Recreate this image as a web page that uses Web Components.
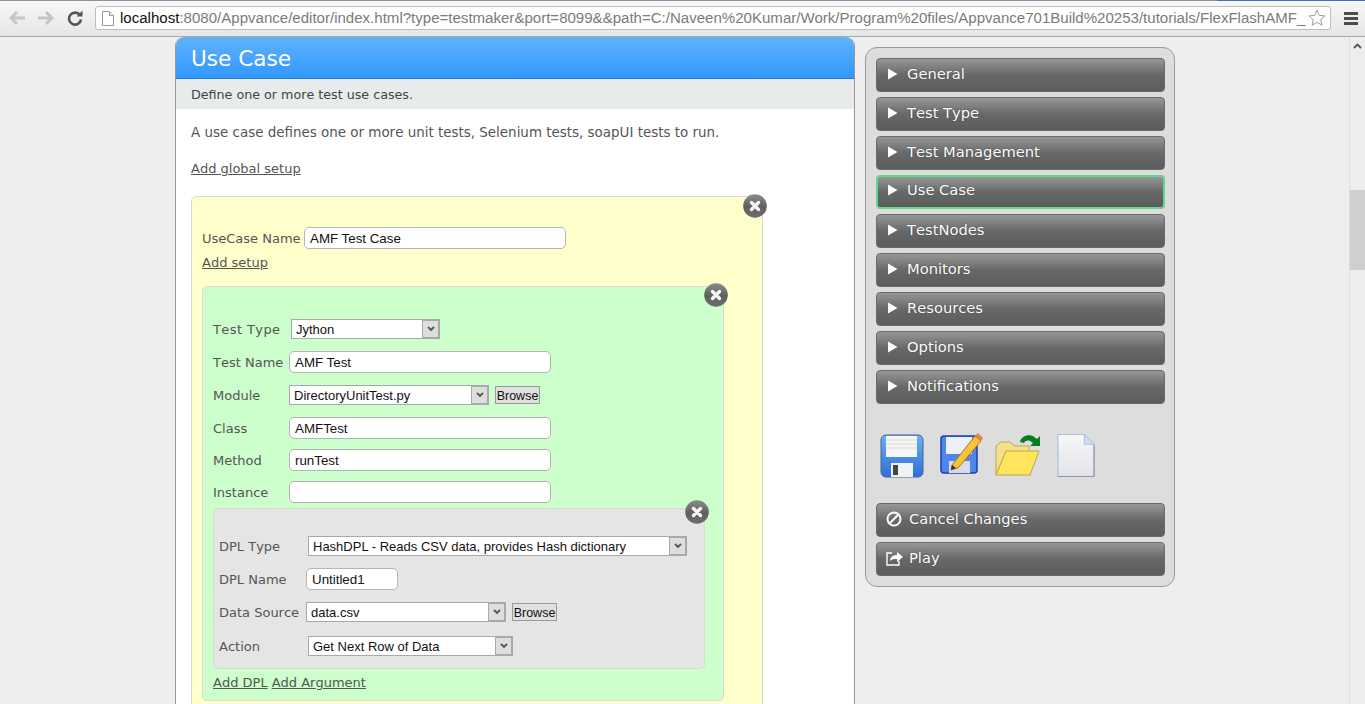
<!DOCTYPE html>
<html>
<head>
<meta charset="utf-8">
<title>Use Case</title>
<style>
html,body{margin:0;padding:0;height:704px;overflow:hidden;background:#eee;font-family:'DejaVu Sans',sans-serif;font-kerning:none;}
#page{display:flex;height:667px;overflow:hidden;}
#page main-area{flex:1;}
</style>
</head>
<body>
<browser-bar></browser-bar>
<div id="page">
  <main-area>
    <use-case-card title-text="Use Case" sub-text="Define one or more test use cases.">
      <p class="intro" style="margin:0;color:#555;font-size:13.45px;line-height:16px;padding-top:16px">A use case defines one or more unit tests, Selenium tests, soapUI tests to run.</p>
      <p style="margin:0;padding-top:19px;line-height:16px"><text-link>Add global setup</text-link></p>
      <tinted-box color="#ffffcc" top="19" pad-top="30" pad-bottom="30" width="572" close-right="-5" close-top="-3">
        <form-row label="UseCase Name" label-width="102" height="22"><text-box width="262">AMF Test Case</text-box></form-row>
        <div style="padding-top:1px;line-height:24px"><text-link>Add setup</text-link></div>
        <tinted-box color="#ccffcc" top="11" pad-top="31" width="522" close-right="-5" close-top="-4" height="415">
          <form-row label="Test Type" label-width="78" label-spacing=".4" height="22"><drop-down width="149">Jython</drop-down></form-row>
          <form-row label="Test Name" label-width="76" height="22" top="11"><text-box width="262">AMF Test</text-box></form-row>
          <form-row label="Module" label-width="76" height="22" top="11"><drop-down width="200">DirectoryUnitTest.py</drop-down><browse-button></browse-button></form-row>
          <form-row label="Class" label-width="76" height="22" top="11"><text-box width="262">AMFTest</text-box></form-row>
          <form-row label="Method" label-width="76" height="22" top="10"><text-box width="262">runTest</text-box></form-row>
          <form-row label="Instance" label-width="76" height="22" top="10"><text-box width="262"></text-box></form-row>
          <tinted-box color="#e5e5e5" top="5" pad-top="26" width="492" close-right="-5" close-top="-9" height="161" inner-left="5">
            <form-row label="DPL Type" label-width="89" height="22"><drop-down width="379">HashDPL - Reads CSV data, provides Hash dictionary</drop-down></form-row>
            <form-row label="DPL Name" label-width="87" height="22" top="11"><text-box width="92">Untitled1</text-box></form-row>
            <form-row label="Data Source" label-width="87" height="22" top="11"><drop-down width="200">data.csv</drop-down><browse-button></browse-button></form-row>
            <form-row label="Action" label-width="89" height="22" top="12"><drop-down width="205">Get Next Row of Data</drop-down></form-row>
          </tinted-box>
          <div style="display:flex;gap:4px;padding-top:6px;line-height:16px"><text-link>Add DPL</text-link><text-link>Add Argument</text-link></div>
        </tinted-box>
      </tinted-box>
    </use-case-card>
    <side-panel>
      <nav-button>General</nav-button>
      <nav-button>Test Type</nav-button>
      <nav-button>Test Management</nav-button>
      <nav-button active>Use Case</nav-button>
      <nav-button>TestNodes</nav-button>
      <nav-button>Monitors</nav-button>
      <nav-button>Resources</nav-button>
      <nav-button>Options</nav-button>
      <nav-button>Notifications</nav-button>
      <tool-icons></tool-icons>
      <nav-button icon="cancel">Cancel Changes</nav-button>
      <nav-button icon="play">Play</nav-button>
    </side-panel>
  </main-area>
  <scroll-rail></scroll-rail>
</div>

<script>
class BrowserBar extends HTMLElement{
    constructor(){
        super()
        this._shadowDom = this.attachShadow({mode: 'open'})
    }
    connectedCallback(){
        this._shadowDom.innerHTML=`
        <style>
        :host{display:flex;align-items:center;box-sizing:border-box;height:37px;padding:1px 7px 1px 8px;
            background:linear-gradient(to right,#8a93a3 1217px,#3f74b5 1217px) 0 0/100% 1px no-repeat,linear-gradient(#f8f8f8,#e6e6e6);border-bottom:1px solid #a9a9a9;}
        .nav{width:29px;height:24px;display:flex;align-items:center;justify-content:flex-start;flex:none}
        .omni{flex:1;display:flex;align-items:center;height:24px;box-sizing:border-box;margin-left:1px;padding:0 4px 0 6px;
            background:#fff;border:1px solid #bdbdbd;border-radius:3px;min-width:0}
        .url{flex:1;overflow:hidden;white-space:nowrap;margin-left:6px;font:15.05px 'Liberation Sans',sans-serif;color:#7b7b7b;line-height:22px}
        .url b{font-weight:normal;color:#111}
        svg{display:block;flex:none}
        .menu{margin-left:13px}
        </style>
        <div class="nav"><svg width="18" height="16" viewBox="0 0 18 16"><path d="M9 2 3 8l6 6M3 8h14" fill="none" stroke="#c6c6c6" stroke-width="3"/></svg></div>
        <div class="nav"><svg width="18" height="16" viewBox="0 0 18 16"><path d="M9 2l6 6-6 6M15 8H1" fill="none" stroke="#c6c6c6" stroke-width="3"/></svg></div>
        <div class="nav" style="width:28px"><svg width="16" height="16" viewBox="0 0 16 16" style="margin-left:1px"><path d="M13 5.2A6 6 0 1 0 14 9.5" fill="none" stroke="#555" stroke-width="2.6"/><path d="M9.500 6.500H15.500V.5z" fill="#555"/></svg></div>
        <div class="omni">
            <svg width="12" height="15" viewBox="0 0 12 15"><path d="M.5.5h7l4 4v10H.5z" fill="#fff" stroke="#999"/><path d="M7.500.5v4h4" fill="#eee" stroke="#999"/></svg>
            <div class="url"><b>localhost</b>:8080/Appvance/editor/index.html?type=testmaker&amp;port=8099&amp;&amp;path=C:/Naveen%20Kumar/Work/Program%20files/Appvance701Build%20253/tutorials/FlexFlashAMF_</div>
            <svg width="18" height="18" viewBox="0 0 18 18"><path d="M9 1.200l2.300 5.200 5.600.5-4.200 3.800 1.300 5.500L9 13.300l-5 2.900 1.300-5.500L1.100 6.900l5.600-.5z" fill="#fff" stroke="#9a9a9a"/></svg>
        </div>
        <svg class="menu" width="14" height="13" viewBox="0 0 14 13"><path d="M0 1.500h14M0 6.500h14M0 11.500h14" stroke="#4d4d4d" stroke-width="3"/></svg>
        `
    }
}

class MainArea extends HTMLElement{
    constructor(){
        super()
        this.attachShadow({mode: 'open'}).innerHTML=`
        <style>
        :host{display:flex;align-items:flex-start;gap:10px;padding-left:175px;height:667px;overflow:hidden;}
        </style>
        <slot></slot>
        `
    }
}

class UseCaseCard extends HTMLElement{
    constructor(){
        super()
        this._shadowDom = this.attachShadow({mode: 'open'})
    }
    connectedCallback(){
        this._shadowDom.innerHTML=`
        <style>
        :host{display:block;flex:none;width:680px;height:667px;box-sizing:border-box;background:#fff;
            border:solid #999;border-width:0 1px;border-radius:9px 9px 0 0;overflow:hidden;}
        h1{margin:0;height:42px;box-sizing:border-box;padding-left:15px;font:normal 21.6px/43px 'DejaVu Sans',sans-serif;color:#fff;
            background:linear-gradient(#5fb3fb,#3297fe);border-bottom:1px solid #1f7fc4;}
        .sub{height:30px;padding-left:15px;background:#e8ebec;color:#444;font-size:12.7px;line-height:31px}
        .body{padding:0 15px}
        </style>
        <h1>${this.getAttribute('title-text')}</h1>
        <div class="sub">${this.getAttribute('sub-text')}</div>
        <div class="body"><slot></slot></div>
        `
    }
}

class TextLink extends HTMLElement{
    constructor(){
        super()
        this.attachShadow({mode: 'open'}).innerHTML=`
        <style>
        :host{display:inline;color:#555;font-size:13px;text-decoration:underline;cursor:pointer}
        </style>
        <slot></slot>
        `
    }
}

class TintedBox extends HTMLElement{
    constructor(){
        super()
        this._shadowDom = this.attachShadow({mode: 'open'})
    }
    connectedCallback(){
        const color = this.getAttribute('color')
        const top = this.getAttribute('top') || 0
        const padTop = this.getAttribute('pad-top') || 0
        const padBottom = this.getAttribute('pad-bottom') || 0
        const width = this.getAttribute('width')
        const height = this.getAttribute('height')
        const innerLeft = this.getAttribute('inner-left') || 10
        this._shadowDom.innerHTML=`
        <style>
        :host{display:block;position:relative;box-sizing:border-box;width:${width}px;margin-top:${top}px;
            ${height ? `height:${height}px;` : ''}padding:${padTop}px 10px ${padBottom}px ${innerLeft}px;
            background:${color};border:1px solid #d8d8d8;border-radius:5px;}
        close-badge{position:absolute;right:${this.getAttribute('close-right')}px;top:${this.getAttribute('close-top')}px}
        </style>
        <close-badge></close-badge>
        <slot></slot>
        `
    }
}

class CloseBadge extends HTMLElement{
    constructor(){
        super()
        this.attachShadow({mode: 'open'}).innerHTML=`
        <style>
        :host{display:block;width:24px;height:24px}
        svg{display:block}
        </style>
        <svg width="24" height="24" viewBox="0 0 24 24">
            <defs><linearGradient id="g" x1="0" y1="0" x2="0" y2="1"><stop offset="0" stop-color="#8c8c8c"/><stop offset=".55" stop-color="#5f5f5f"/><stop offset="1" stop-color="#6e6e6e"/></linearGradient></defs>
            <circle cx="12" cy="12" r="11.800" fill="url(#g)"/>
            <path d="M8.500 8.500l7 7M15.500 8.500l-7 7" stroke="#f4f4f4" stroke-width="3.400" stroke-linecap="round"/>
        </svg>
        `
    }
}

class FormRow extends HTMLElement{
    constructor(){
        super()
        this._shadowDom = this.attachShadow({mode: 'open'})
    }
    connectedCallback(){
        this._shadowDom.innerHTML=`
        <style>
        :host{display:flex;align-items:center;height:${this.getAttribute('height')}px;margin-top:${this.getAttribute('top') || 0}px;}
        .lab{flex:none;width:${this.getAttribute('label-width')}px;color:#555;font-size:13px;white-space:nowrap;letter-spacing:${this.getAttribute('label-spacing') || 0}px}
        </style>
        <span class="lab">${this.getAttribute('label')}</span>
        <slot></slot>
        `
    }
}

class TextBox extends HTMLElement{
    constructor(){
        super()
        this._shadowDom = this.attachShadow({mode: 'open'})
    }
    connectedCallback(){
        this._shadowDom.innerHTML=`
        <style>
        :host{display:block;flex:none;box-sizing:border-box;width:${this.getAttribute('width')}px;height:22px;padding-left:5px;
            background:#fff;border:1px solid #b5b5b5;border-radius:5px;color:#111;font:13.33px/22px 'Liberation Sans',sans-serif;}
        </style>
        <slot></slot>
        `
    }
}

class DropDown extends HTMLElement{
    constructor(){
        super()
        this._shadowDom = this.attachShadow({mode: 'open'})
    }
    connectedCallback(){
        this._shadowDom.innerHTML=`
        <style>
        :host{display:flex;flex:none;box-sizing:border-box;width:${this.getAttribute('width')}px;height:20px;
            background:#fff;border:1px solid #a9a9a9;color:#111;font:13px/20px 'Liberation Sans',sans-serif;}
        .val{flex:1;padding-left:4px;white-space:nowrap;overflow:hidden}
        .btn{flex:none;box-sizing:border-box;width:17px;background:#dedede;border:1px solid #a9a9a9;display:flex;align-items:center;justify-content:center}
        svg{display:block}
        </style>
        <div class="val"><slot></slot></div>
        <div class="btn"><svg width="8" height="6" viewBox="0 0 8 6"><path d="M1 1l3 3 3-3" fill="none" stroke="#555" stroke-width="1.800"/></svg></div>
        `
    }
}

class BrowseButton extends HTMLElement{
    constructor(){
        super()
        this.attachShadow({mode: 'open'}).innerHTML=`
        <style>
        :host{display:block;flex:none;box-sizing:border-box;margin-left:6px;width:45px;height:18px;text-align:center;
            background:#e0e0e0;border:1px solid #999;color:#111;font:12.5px/18px 'Liberation Sans',sans-serif;}
        </style>
        Browse
        `
    }
}

class SidePanel extends HTMLElement{
    constructor(){
        super()
        this.attachShadow({mode: 'open'}).innerHTML=`
        <style>
        :host{display:flex;flex-direction:column;gap:5px;flex:none;box-sizing:border-box;width:310px;height:540px;margin-top:10px;
            padding:10px 9px 0 10px;background:#ddd;border:1px solid #9a9aa5;border-radius:12px;}
        </style>
        <slot></slot>
        `
    }
}

class NavButton extends HTMLElement{
    constructor(){
        super()
        this._shadowDom = this.attachShadow({mode: 'open'})
    }
    connectedCallback(){
        const icon = this.getAttribute('icon')
        let mark = '<svg width="10" height="12" viewBox="0 0 10 12" style="margin-left:11px;margin-right:9px"><path d="M0 .5 9.500 6 0 11.500z" fill="#fff"/></svg>'
        if (icon == 'cancel'){
            mark = '<svg width="16" height="16" viewBox="0 0 16 16" style="margin-left:9px;margin-right:7px"><circle cx="8" cy="8" r="6.500" fill="none" stroke="#fff" stroke-width="2"/><path d="M4 12l8-8" stroke="#fff" stroke-width="2"/></svg>'
        }
        if (icon == 'play'){
            mark = '<svg width="17" height="16" viewBox="0 0 17 16" style="margin-left:9px;margin-right:6px"><path d="M6 3H1v12h12v-4" fill="none" stroke="#fff" stroke-width="1.400"/><path d="M4 11c0-4 3-6 7-6V2l6 5-6 5V9c-3 0-5 0-7 2z" fill="#fff"/></svg>'
        }
        this._shadowDom.innerHTML=`
        <style>
        :host{display:flex;align-items:center;flex:none;box-sizing:border-box;height:34px;padding-bottom:3px;
            background:linear-gradient(#979797 0,#686868 50%,#5c5c5c 100%);border:1px solid #6b6b6b;border-radius:4px;
            color:#fff;font-size:14.7px;text-shadow:0 0 1px #333;}
        :host([active]){border:2px solid #5fd98a;padding-bottom:5px}
        :host([active]) svg{margin-left:10px !important}
        svg{display:block;flex:none}
        </style>
        ${mark}<slot></slot>
        `
    }
}

class ToolIcons extends HTMLElement{
    constructor(){
        super()
        this.attachShadow({mode: 'open'}).innerHTML=`
        <style>
        :host{display:flex;align-items:flex-start;height:66px;padding:23px 0 0 4px;box-sizing:content-box;}
        svg{display:block;flex:none}
        </style>
        <svg width="45" height="45" viewBox="0 0 45 45" style="margin-top:2px">
            <defs><linearGradient id="b" x1="0" y1="0" x2="0" y2="1"><stop offset="0" stop-color="#6db0f5"/><stop offset="1" stop-color="#2c6fd6"/></linearGradient></defs>
            <rect x="1" y="1" width="42" height="42" rx="5" fill="url(#b)" stroke="#46608c"/>
            <rect x="6" y="2" width="31" height="21" fill="#f5f5f5"/>
            <path d="M6 6h31M6 10h31M6 14h31" stroke="#dcdcdc"/>
            <rect x="11" y="29" width="22" height="14" fill="#eef1f5"/><rect x="13" y="31" width="5" height="10" fill="#444"/>
        </svg>
        <svg width="44" height="44" viewBox="0 0 44 44" style="margin-left:15px">
            <rect x="1" y="4" width="36" height="37" rx="3" fill="#4f86ee" stroke="#1d3fb3" stroke-width="1.500"/>
            <rect x="6" y="5" width="26" height="17" fill="#eef0f8"/>
            <rect x="9" y="29" width="21" height="12" fill="#d9dbea"/>
            <path d="M12 33 35 4l6 5-23 27-7 2z" fill="#f7c23c" stroke="#b07a10"/>
            <path d="M35 4l6 5 2-3-5-5z" fill="#e6824a"/>
            <path d="M12 33l-1 5 5-2z" fill="#333"/>
        </svg>
        <svg width="48" height="45" viewBox="0 0 48 45" style="margin-left:11px">
            <path d="M1 43V14l5-4h9l5 4h14v6H11L1 43z" fill="#f5e08a" stroke="#bfa64a"/>
            <path d="M1 43 11 19h33L35 43z" fill="#ffe45e" stroke="#bfa64a"/>
            <path d="M25 10c1-6 8-8 13-6l4 3 3-3v10H35l3-3-3-2c-3-1-5 0-6 2z" fill="#0b7c1c"/>
        </svg>
        <svg width="39" height="45" viewBox="0 0 40 45" style="margin-left:14px;margin-top:1px">
            <defs><linearGradient id="d" x1="0" y1="0" x2="0" y2="1"><stop offset="0" stop-color="#f8f8f8"/><stop offset="1" stop-color="#e2e2ea"/></linearGradient></defs>
            <path d="M1 1h27l10 10v33H1z" fill="url(#d)" stroke="#a9c0e4" stroke-width="1.200"/>
            <path d="M28 1v10h10z" fill="#cfe0f6" stroke="#a9c0e4"/>
            <path d="M38 12v32H1" fill="none" stroke="#8f8fa5"/>
        </svg>
        `
    }
}

class ScrollRail extends HTMLElement{
    constructor(){
        super()
        this.attachShadow({mode: 'open'}).innerHTML=`
        <style>
        :host{display:block;flex:none;position:relative;width:16px;height:667px;box-sizing:border-box;background:#eee;border-left:1px solid #ddd;}
        svg{display:block;margin:6px 0 0 3px}
        .thumb{margin-top:141px;height:80px;background:#cfcfcf}
        </style>
        <svg width="9" height="6" viewBox="0 0 9 6"><path d="M1 5l3.500-3.500L8 5" fill="none" stroke="#555" stroke-width="1.800"/></svg>
        <div class="thumb"></div>
        `
    }
}

window.customElements.define('browser-bar', BrowserBar)
window.customElements.define('main-area', MainArea)
window.customElements.define('use-case-card', UseCaseCard)
window.customElements.define('text-link', TextLink)
window.customElements.define('tinted-box', TintedBox)
window.customElements.define('close-badge', CloseBadge)
window.customElements.define('form-row', FormRow)
window.customElements.define('text-box', TextBox)
window.customElements.define('drop-down', DropDown)
window.customElements.define('browse-button', BrowseButton)
window.customElements.define('side-panel', SidePanel)
window.customElements.define('nav-button', NavButton)
window.customElements.define('tool-icons', ToolIcons)
window.customElements.define('scroll-rail', ScrollRail)
</script>
</body>
</html>
